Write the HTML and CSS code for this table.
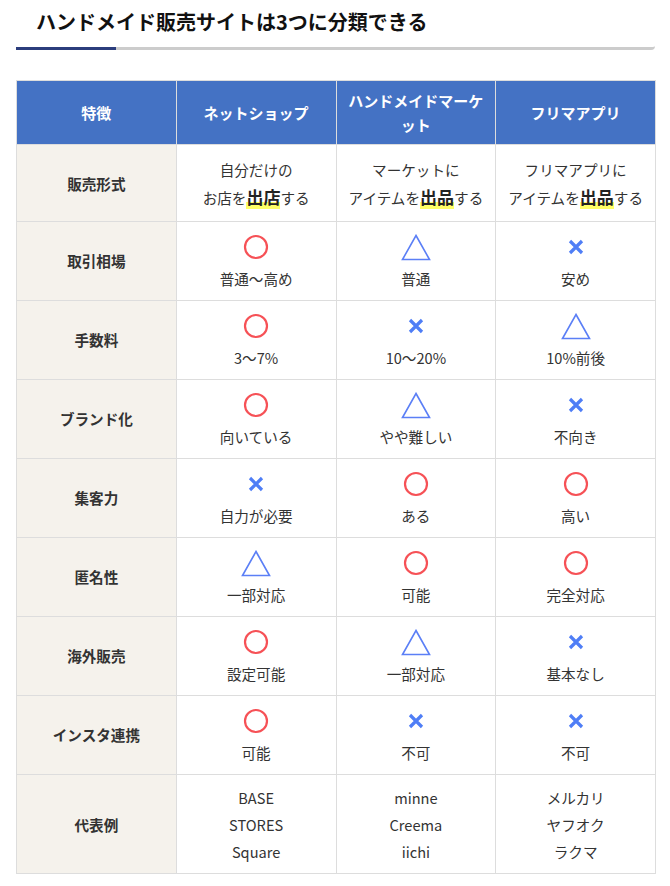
FILE: index.html
```html
<!DOCTYPE html>
<html lang="ja">
<head>
<meta charset="utf-8">
<link rel="stylesheet" href="styles.css">
</head>
<body>
<div class="page">
  <h2 class="title">ハンドメイド販売サイトは3つに分類できる</h2>
  <table class="cmp">
    <thead>
      <tr><th>特徴</th><th>ネットショップ</th><th>ハンドメイドマーケット</th><th>フリマアプリ</th></tr>
    </thead>
    <tbody>
      <tr class="r-text">
        <th>販売形式</th>
        <td>自分だけの<br>お店を<span class="mark">出店</span>する</td>
        <td>マーケットに<br>アイテムを<span class="mark">出品</span>する</td>
        <td>フリマアプリに<br>アイテムを<span class="mark">出品</span>する</td>
      </tr>
      <tr class="r-icon">
        <th>取引相場</th>
        <td><div class="ic"><svg class="maru" width="26" height="26" viewBox="0 0 26 26"><circle cx="13" cy="13" r="11"/></svg></div>普通〜高め</td>
        <td><div class="ic"><svg class="sankaku" width="30" height="27" viewBox="0 0 30 27"><polygon points="15,1.5 28.5,25.5 1.5,25.5"/></svg></div>普通</td>
        <td><div class="ic"><svg class="batsu" width="16" height="16" viewBox="0 0 16 16"><path d="M2 2L14 14M14 2L2 14"/></svg></div>安め</td>
      </tr>
      <tr class="r-icon">
        <th>手数料</th>
        <td><div class="ic"><svg class="maru" width="26" height="26" viewBox="0 0 26 26"><circle cx="13" cy="13" r="11"/></svg></div>3〜7%</td>
        <td><div class="ic"><svg class="batsu" width="16" height="16" viewBox="0 0 16 16"><path d="M2 2L14 14M14 2L2 14"/></svg></div>10〜20%</td>
        <td><div class="ic"><svg class="sankaku" width="30" height="27" viewBox="0 0 30 27"><polygon points="15,1.5 28.5,25.5 1.5,25.5"/></svg></div>10%前後</td>
      </tr>
      <tr class="r-icon">
        <th>ブランド化</th>
        <td><div class="ic"><svg class="maru" width="26" height="26" viewBox="0 0 26 26"><circle cx="13" cy="13" r="11"/></svg></div>向いている</td>
        <td><div class="ic"><svg class="sankaku" width="30" height="27" viewBox="0 0 30 27"><polygon points="15,1.5 28.5,25.5 1.5,25.5"/></svg></div>やや難しい</td>
        <td><div class="ic"><svg class="batsu" width="16" height="16" viewBox="0 0 16 16"><path d="M2 2L14 14M14 2L2 14"/></svg></div>不向き</td>
      </tr>
      <tr class="r-icon">
        <th>集客力</th>
        <td><div class="ic"><svg class="batsu" width="16" height="16" viewBox="0 0 16 16"><path d="M2 2L14 14M14 2L2 14"/></svg></div>自力が必要</td>
        <td><div class="ic"><svg class="maru" width="26" height="26" viewBox="0 0 26 26"><circle cx="13" cy="13" r="11"/></svg></div>ある</td>
        <td><div class="ic"><svg class="maru" width="26" height="26" viewBox="0 0 26 26"><circle cx="13" cy="13" r="11"/></svg></div>高い</td>
      </tr>
      <tr class="r-icon">
        <th>匿名性</th>
        <td><div class="ic"><svg class="sankaku" width="30" height="27" viewBox="0 0 30 27"><polygon points="15,1.5 28.5,25.5 1.5,25.5"/></svg></div>一部対応</td>
        <td><div class="ic"><svg class="maru" width="26" height="26" viewBox="0 0 26 26"><circle cx="13" cy="13" r="11"/></svg></div>可能</td>
        <td><div class="ic"><svg class="maru" width="26" height="26" viewBox="0 0 26 26"><circle cx="13" cy="13" r="11"/></svg></div>完全対応</td>
      </tr>
      <tr class="r-icon">
        <th>海外販売</th>
        <td><div class="ic"><svg class="maru" width="26" height="26" viewBox="0 0 26 26"><circle cx="13" cy="13" r="11"/></svg></div>設定可能</td>
        <td><div class="ic"><svg class="sankaku" width="30" height="27" viewBox="0 0 30 27"><polygon points="15,1.5 28.5,25.5 1.5,25.5"/></svg></div>一部対応</td>
        <td><div class="ic"><svg class="batsu" width="16" height="16" viewBox="0 0 16 16"><path d="M2 2L14 14M14 2L2 14"/></svg></div>基本なし</td>
      </tr>
      <tr class="r-icon">
        <th>インスタ連携</th>
        <td><div class="ic"><svg class="maru" width="26" height="26" viewBox="0 0 26 26"><circle cx="13" cy="13" r="11"/></svg></div>可能</td>
        <td><div class="ic"><svg class="batsu" width="16" height="16" viewBox="0 0 16 16"><path d="M2 2L14 14M14 2L2 14"/></svg></div>不可</td>
        <td><div class="ic"><svg class="batsu" width="16" height="16" viewBox="0 0 16 16"><path d="M2 2L14 14M14 2L2 14"/></svg></div>不可</td>
      </tr>
      <tr class="r-list">
        <th>代表例</th>
        <td>BASE<br>STORES<br>Square</td>
        <td>minne<br>Creema<br>iichi</td>
        <td>メルカリ<br>ヤフオク<br>ラクマ</td>
      </tr>
    </tbody>
  </table>
</div>
</body>
</html>
```
FILE: styles.css
```css
html, body {
  margin: 0;
  padding: 0;
  background: #fff;
}
body {
  font-family: "Noto Sans CJK JP", "Noto Sans", sans-serif;
  color: #333;
}
.page {
  padding: 0 0 0 16px;
}
.title {
  position: relative;
  width: 599px;
  margin: 0;
  padding: 7px 20px 10px 20px;
  font-size: 20px;
  line-height: 30px;
  font-weight: 700;
  color: #111;
  border-bottom: 3px solid #ccc;
  border-bottom-right-radius: 4px;
}
.title::after {
  content: "";
  position: absolute;
  left: 0;
  bottom: -3px;
  width: 100px;
  height: 3px;
  background: #2b3d7c;
}
.cmp {
  width: 640px;
  margin-top: 30px;
  border-collapse: collapse;
  table-layout: fixed;
  font-size: 14.6px;
  line-height: 27px;
  text-align: center;
}
.cmp th, .cmp td {
  border: 1px solid #ddd;
  vertical-align: middle;
  padding: 10px 8px;
}
.cmp thead th {
  background: #4472c4;
  color: #fff;
  font-size: 15px;
  line-height: 24px;
  font-weight: 700;
  padding: 8px 10px 7px 10px;
}
.cmp tbody th {
  background: #f5f2ec;
  color: #333;
  font-weight: 700;
}
.r-text td, .r-text th {
  padding-top: 11px;
  padding-bottom: 10px;
}
.r-icon td, .r-icon th {
  padding-top: 7px;
  padding-bottom: 8px;
}
.r-list td, .r-list th {
  padding-top: 9px;
  padding-bottom: 8px;
}
.ic {
  height: 36px;
  display: flex;
  align-items: center;
  justify-content: center;
}
.maru {
  fill: none;
  stroke: #f65156;
  stroke-width: 2.2;
}
.sankaku {
  fill: none;
  stroke: #5b7ff6;
  stroke-width: 1.6;
  stroke-linejoin: miter;
}
.batsu {
  fill: none;
  stroke: #4f7ef6;
  stroke-width: 3.2;
}
.mark {
  font-size: 17px;
  font-weight: 700;
  color: #222;
  background: linear-gradient(transparent 72%, #ffff66 72%);
}
```
